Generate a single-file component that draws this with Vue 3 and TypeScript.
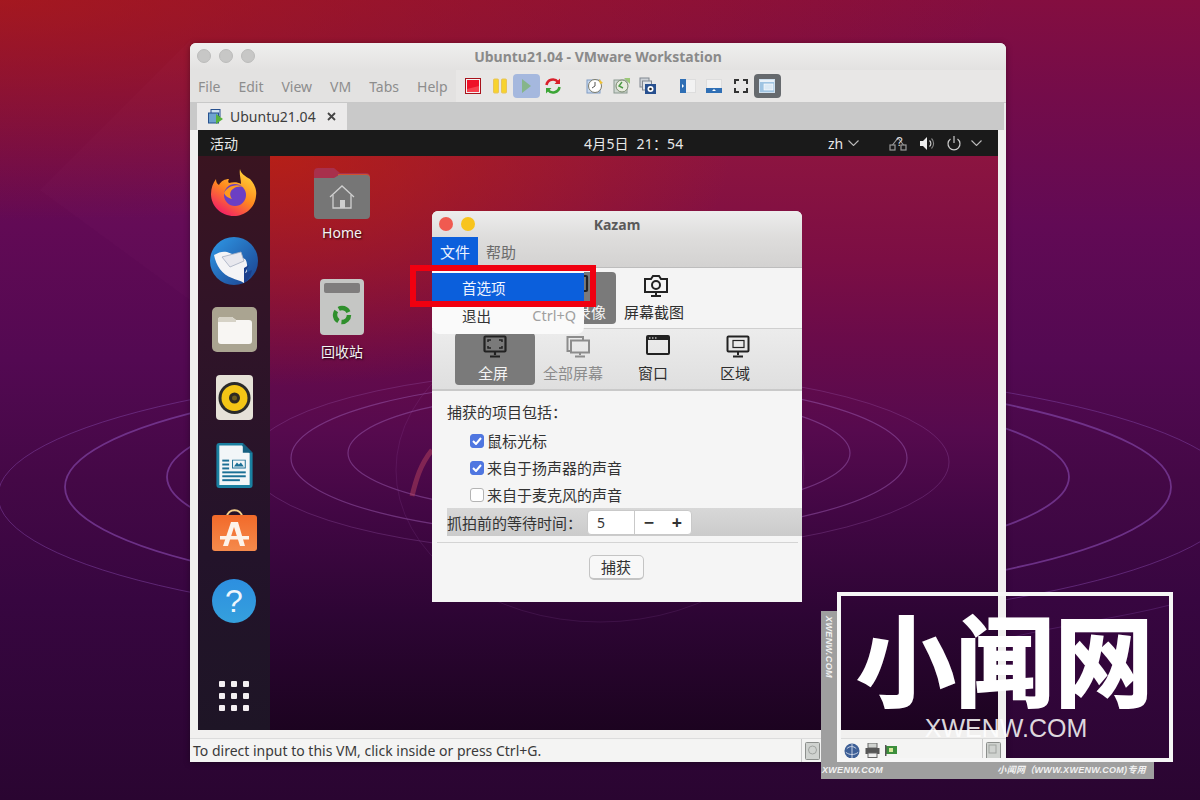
<script setup lang="ts">
const menus: string[] = ['File', 'Edit', 'View', 'VM', 'Tabs', 'Help']

const sources = [
  { label: '全屏', active: true, muted: false, icon: 'full' },
  { label: '全部屏幕', active: false, muted: true, icon: 'all' },
  { label: '窗口', active: false, muted: false, icon: 'window' },
  { label: '区域', active: false, muted: false, icon: 'area' },
]

const options = [
  { label: '鼠标光标', checked: true },
  { label: '来自于扬声器的声音', checked: true },
  { label: '来自于麦克风的声音', checked: false },
]
</script>

<template>
  <div class="stage">
    <!-- wallpaper lines -->
    <svg class="wall-lines" width="1200" height="800" viewBox="0 0 1200 800" fill="none">
      <path d="M190 40L40 190L190 300Z" fill="#ff9ab8" fill-opacity=".018" />
      <g stroke="#7c3f9e" stroke-opacity=".75">
        <ellipse cx="618" cy="477" rx="451" ry="95" stroke-width="1.800" />
        <ellipse cx="618" cy="487" rx="553" ry="116" stroke-width="1.800" />
        <ellipse cx="618" cy="496" rx="620" ry="133" stroke-width="1" stroke-opacity=".55" />
      </g>
      <path d="M1000 640C1060 625 1120 618 1170 605" stroke="#7c3f9e" stroke-opacity=".35" />
    </svg>

    <div class="vm-window">
      <div class="vm-title">
        <div class="lights">
          <i></i><i></i><i></i>
        </div>
        <span>Ubuntu21.04 - VMware Workstation</span>
      </div>

      <div class="vm-toolbar">
        <nav class="vm-menu">
          <span v-for="m in menus" :key="m">{{ m }}</span>
        </nav>
        <div class="tools">
          <span class="tool">
            <svg width="16" height="16" viewBox="0 0 16 16">
              <rect x=".5" y=".5" width="15" height="15" fill="#f3f3f3" stroke="#a8131c" />
              <rect x="2" y="2" width="12" height="12" fill="#ee1128" />
              <path d="M14 14H2V11L14 8z" fill="#f8404e" />
            </svg>
          </span>
          <span class="tool">
            <svg width="16" height="16" viewBox="0 0 16 16">
              <rect x="1.500" y="1" width="5" height="14" rx="1" fill="#f7d32e" stroke="#e8c45a" />
              <rect x="9.500" y="1" width="5" height="14" rx="1" fill="#f7d32e" stroke="#e8c45a" />
            </svg>
          </span>
          <span class="tool tool-on">
            <svg width="16" height="16" viewBox="0 0 16 16"><path d="M4 1l9 7-9 7z" fill="#86b58a" /></svg>
          </span>
          <span class="tool">
            <svg width="18" height="18" viewBox="0 0 18 18" fill="none">
              <path d="M2.500 8A6.500 6.500 0 0 1 14 5" stroke="#d91f2a" stroke-width="2.600" />
              <path d="M15.500 10A6.500 6.500 0 0 1 4 13" stroke="#3ba535" stroke-width="2.600" />
              <path d="M16 1.500v5.500h-5.500z" fill="#d91f2a" />
              <path d="M2 16.500V11h5.500z" fill="#3ba535" />
            </svg>
          </span>
          <span class="tool gap-left">
            <svg width="18" height="18" viewBox="0 0 18 18">
              <rect x="1" y="3" width="13" height="13" fill="#c8d8ee" stroke="#7f9cc4" />
              <circle cx="9" cy="9" r="6.500" fill="#fff" stroke="#7a7a6a" />
              <path d="M9 5v4l-3 2" stroke="#555" fill="none" />
              <path d="M13 2l4 4-3 1z" fill="#f2c230" />
            </svg>
          </span>
          <span class="tool">
            <svg width="18" height="18" viewBox="0 0 18 18">
              <rect x="1" y="3" width="13" height="13" fill="#cfd6d0" stroke="#8a9a90" />
              <circle cx="9" cy="9" r="6" fill="#e8ecdf" stroke="#7a8a70" />
              <path d="M9 5l-3 4 4 2" stroke="#4d9a45" stroke-width="1.400" fill="none" />
              <path d="M11 1h6v6z" fill="#9cc878" />
            </svg>
          </span>
          <span class="tool">
            <svg width="18" height="18" viewBox="0 0 18 18">
              <rect x="1" y="1" width="9" height="9" fill="#cfd3d8" stroke="#808890" />
              <rect x="3.500" y="4" width="9" height="9" fill="#dfe3e8" stroke="#808890" />
              <rect x="6" y="7" width="11" height="10" fill="#27508f" />
              <circle cx="11.500" cy="12" r="3" fill="#fff" />
              <circle cx="11.500" cy="12" r="1.300" fill="#222" />
            </svg>
          </span>
          <span class="tool gap-right">
            <svg width="16" height="16" viewBox="0 0 16 16">
              <rect x=".5" y="1.500" width="15" height="13" fill="#f2f2f2" stroke="#ddd" />
              <rect x="0" y="1" width="6" height="14" fill="#2f6fb5" />
              <path d="M2 6l2 2-2 2z" fill="#fff" />
            </svg>
          </span>
          <span class="tool">
            <svg width="16" height="16" viewBox="0 0 16 16">
              <rect x=".5" y="1.500" width="15" height="13" fill="#f2f2f2" stroke="#ddd" />
              <rect x="0" y="10" width="16" height="5" fill="#2f6fb5" />
              <path d="M6 13l2-2 2 2z" fill="#fff" />
            </svg>
          </span>
          <span class="tool">
            <svg width="14" height="14" viewBox="0 0 14 14" fill="none" stroke="#333" stroke-width="2">
              <path d="M1 5V1h4M9 1h4v4M13 9v4H9M5 13H1V9" />
            </svg>
          </span>
          <span class="tool tool-dark">
            <svg width="16" height="14" viewBox="0 0 16 14">
              <rect x=".5" y=".5" width="15" height="13" fill="#9fc4e2" stroke="#cfe0ee" />
              <rect x="1" y="1" width="14" height="2" fill="#e9f1f8" />
              <rect x="5" y="5" width="9" height="6" fill="#dbe9f4" stroke="#fff" stroke-width=".6" />
            </svg>
          </span>
        </div>
      </div>

      <div class="vm-tabs">
        <div class="vm-tab">
          <svg width="16" height="16" viewBox="0 0 16 16">
            <rect x="3" y="0.5" width="9" height="7" fill="#cfe0ef" stroke="#27508f" />
            <rect x=".5" y="4" width="10" height="10" fill="#6fa3cf" stroke="#27508f" />
            <path d="M8 5l7 5-7 5z" fill="#57b13a" />
          </svg>
          <span>Ubuntu21.04</span>
          <svg class="tab-x" width="9" height="9" viewBox="0 0 9 9" stroke="#444" stroke-width="1.800">
            <path d="M1 1l7 7M8 1l-7 7" />
          </svg>
        </div>
      </div>

      <div class="guest">
        <header class="gnome-bar">
          <span class="activities">活动</span>
          <span class="clock">4月5日&nbsp;&nbsp;21：54</span>
          <div class="tray">
            <span class="lang">zh</span>
            <svg class="caret" width="11" height="6" viewBox="0 0 11 6" fill="none" stroke="#bbb" stroke-width="1.100"><path d="M.5.5l5 5 5-5" /></svg>
            <svg class="net" width="18" height="16" viewBox="0 0 18 16" fill="none" stroke="#999" stroke-width="1.200">
              <rect x="1" y="10" width="5" height="5" />
              <rect x="12" y="10" width="5" height="5" />
              <path d="M3.500 10L9 3l5.500 7" />
              <text x="7" y="11" font-size="12" fill="#ddd" stroke="none" font-family="Liberation Sans, sans-serif">?</text>
            </svg>
            <svg class="vol" width="15" height="13" viewBox="0 0 15 13" fill="none">
              <path d="M0 4h3l4-4v13l-4-4H0z" fill="#eee" />
              <path d="M9.500 3.500a4 4 0 0 1 0 6" stroke="#ccc" stroke-width="1.200" />
              <path d="M11.500 1.500a7 7 0 0 1 0 10" stroke="#888" stroke-width="1.100" />
            </svg>
            <svg class="pow" width="14" height="15" viewBox="0 0 14 15" fill="none" stroke="#ccc" stroke-width="1.200">
              <path d="M7 0v7" />
              <path d="M3.500 3a6 6 0 1 0 7 0" />
            </svg>
            <svg class="caret last" width="11" height="6" viewBox="0 0 11 6" fill="none" stroke="#bbb" stroke-width="1.100"><path d="M.5.5l5 5 5-5" /></svg>
          </div>
        </header>

        <div class="guest-body">
          <aside class="dock">
            <!-- firefox -->
            <svg width="46" height="48" viewBox="0 0 46 48">
              <defs>
                <linearGradient id="ff" x1="0.8" y1="0" x2="0.2" y2="1">
                  <stop offset="0" stop-color="#ffd93b" />
                  <stop offset=".5" stop-color="#ff8a1f" />
                  <stop offset="1" stop-color="#f0146c" />
                </linearGradient>
              </defs>
              <path d="M29 1c1 5 5 7 10 10 5 5 7 12 6 17-1 12-11 20-22 20C10 48 0 38 0 26 0 20 2 15 5 11c0 3 1 5 3 6 2-4 6-6 10-6-1 2-1 3 0 4 4-1 9-1 12 1 0-5-2-10-1-15z" fill="url(#ff)" />
              <circle cx="24" cy="27" r="11" fill="#6b3fc4" />
              <path d="M13 25c3-6 12-11 22-5-4-2-9-2-13 1-3 2-4 6-1 10-4-1-7-3-8-6z" fill="#ff9a1f" />
            </svg>
            <!-- thunderbird -->
            <svg width="48" height="48" viewBox="0 0 48 48">
              <defs>
                <linearGradient id="tb" x1="0" y1="0" x2="1" y2="1">
                  <stop offset="0" stop-color="#2f9ae8" />
                  <stop offset="1" stop-color="#1b3f8c" />
                </linearGradient>
              </defs>
              <circle cx="24" cy="24" r="24" fill="url(#tb)" />
              <path d="M4 18c5-3 9-4 13-3l18 7c3 3 3 12-1 24-4-3-8-3-12-5C12 38 6 28 4 18z" fill="#f4f4f6" />
              <path d="M12 20l19-5 3 9-14 6z" fill="#e8e8ee" stroke="#a5adc0" stroke-width=".8" />
              <path d="M34 46c5-3 7-8 8-13l-7 3 4-8-5 3z" fill="#1b3f8c" />
            </svg>
            <!-- files -->
            <svg class="tile-files" width="45" height="45" viewBox="0 0 45 45">
              <rect width="45" height="45" rx="5" fill="#aaa491" />
              <path d="M6 13a3 3 0 0 1 3-3h11l4 3h13a3 3 0 0 1 3 3v18a3 3 0 0 1-3 3H9a3 3 0 0 1-3-3z" fill="#f8f6f3" />
              <path d="M6 13a3 3 0 0 1 3-3h11l4 3v2H6z" fill="#d6d2c6" />
            </svg>
            <!-- rhythmbox -->
            <svg width="37" height="45" viewBox="0 0 37 45">
              <rect width="37" height="45" rx="4" fill="#e6e1d8" />
              <circle cx="18.500" cy="23" r="16" fill="#2a2a2a" />
              <circle cx="18.500" cy="23" r="13" fill="#f3c516" />
              <circle cx="18.500" cy="23" r="5.500" fill="#2d2a22" />
              <circle cx="18.500" cy="23" r="2.500" fill="#6c5c1c" />
            </svg>
            <!-- writer -->
            <svg class="tile-writer" width="37" height="45" viewBox="0 0 37 46">
              <path d="M3 0h24l10 10v33a3 3 0 0 1-3 3H3a3 3 0 0 1-3-3V3a3 3 0 0 1 3-3z" fill="#1a7fa0" />
              <path d="M3 2.500h23l8 8V43H3z" fill="#f2f6f8" />
              <path d="M27 0l10 10H27z" fill="#155f80" />
              <g fill="#1a6f95">
                <rect x="6" y="17" width="7" height="2" />
                <rect x="6" y="21" width="7" height="2" />
                <rect x="6" y="25" width="7" height="2" />
                <rect x="6" y="29" width="24" height="2" />
                <rect x="6" y="33" width="24" height="2" />
                <rect x="6" y="37" width="18" height="2" />
                <path d="M16 17h14v9H16zm1 1v7h12v-7z" />
                <path d="M18 24l3-4 2 2 2-2 3 4z" />
              </g>
            </svg>
            <!-- software -->
            <svg width="45" height="42" viewBox="0 0 45 42">
              <defs>
                <linearGradient id="sw" x1="0" y1="0" x2="0" y2="1">
                  <stop offset="0" stop-color="#f26a2a" />
                  <stop offset="1" stop-color="#f58a4c" />
                </linearGradient>
              </defs>
              <path d="M15 8c0-9 15-9 15 0" fill="none" stroke="#f5d08a" stroke-width="2" />
              <rect y="6" width="45" height="36" rx="3" fill="url(#sw)" />
              <path d="M19 13h7l7 24h-5l-6-19-6 19h-5z" fill="#fdf3ea" />
              <rect x="8" y="27" width="29" height="3.500" fill="#fdf3ea" />
            </svg>
            <!-- help -->
            <div class="help">?</div>
            <div class="app-grid">
              <i v-for="n in 9" :key="n"></i>
            </div>
          </aside>

          <main class="desktop">
            <svg class="guest-lines" width="728" height="574" viewBox="270 156 728 574" fill="none">
              <g stroke="#9a5ab0" stroke-opacity=".5" stroke-width="1.200">
                <ellipse cx="599" cy="453" rx="251" ry="62" />
                <ellipse cx="599" cy="458" rx="308" ry="78" />
                <ellipse cx="599" cy="462" rx="350" ry="92" stroke-opacity=".3" stroke-width="1" />
                <ellipse cx="600" cy="470" rx="204" ry="152" stroke-opacity=".16" stroke-width="1" />
              </g>
              <path d="M432 450C420 465 416 480 412 496" stroke="#c04a60" stroke-opacity=".45" stroke-width="5" />
            </svg>

            <figure class="desk-icon home">
              <svg width="56" height="52" viewBox="0 0 56 52">
                <path d="M0 5a4 4 0 0 1 4-4h16l6 5h26a4 4 0 0 1 4 4v8H0z" fill="#a8304c" />
                <path d="M24 7h28a4 4 0 0 1 4 4v6H24z" fill="#d4582c" opacity=".9" />
                <path d="M0 11h20l5-3h27a4 4 0 0 1 4 4v36a4 4 0 0 1-4 4H4a4 4 0 0 1-4-4z" fill="#767676" />
                <g fill="none" stroke="#cfcfcf" stroke-width="1.300">
                  <path d="M16 30l12-11 12 11" />
                  <path d="M19 28v13h18V28" />
                </g>
                <rect x="26" y="33" width="5" height="8" fill="#cfcfcf" />
              </svg>
              <figcaption>Home</figcaption>
            </figure>
            <figure class="desk-icon trash">
              <svg width="44" height="56" viewBox="0 0 44 56">
                <rect width="44" height="56" rx="4" fill="#c5c6c4" />
                <rect x="4" y="4" width="36" height="10" rx="2" fill="#7f7d7d" />
                <circle cx="22" cy="36" r="7" fill="none" stroke="#2f8f2c" stroke-width="4.400" stroke-dasharray="11.500 3.160" />
              </svg>
              <figcaption>回收站</figcaption>
            </figure>

            <section class="kazam">
              <div class="k-title">
                <i class="k-close"></i><i class="k-min"></i>
                <strong>Kazam</strong>
              </div>
              <div class="k-menubar">
                <span class="k-menu on">文件</span>
                <span class="k-menu">帮助</span>
              </div>
              <div class="k-toolbar">
                <div class="k-item on">
                  <svg width="26" height="24" viewBox="0 0 26 24" fill="none" stroke="#222" stroke-width="2.200">
                    <rect x="2" y="2" width="22" height="15" rx="1" />
                    <path d="M13 17v4M8 22h10" />
                  </svg>
                  <span>屏幕录像</span>
                </div>
                <div class="k-item">
                  <svg width="26" height="24" viewBox="0 0 26 24" fill="none" stroke="#222" stroke-width="2">
                    <path d="M2 5h6l2-3h6l2 3h6v13H2z" />
                    <circle cx="13" cy="11" r="4" />
                    <path d="M13 18v3M8 22h10" />
                  </svg>
                  <span>屏幕截图</span>
                </div>
              </div>
              <div class="k-sources">
                <div v-for="s in sources" :key="s.label" class="k-item" :class="{ on: s.active, muted: s.muted }">
                  <svg v-if="s.icon === 'full'" width="24" height="24" viewBox="0 0 24 24" fill="none" stroke="#222" stroke-width="2.200">
                    <rect x="1.500" y="1.500" width="21" height="15" rx="1" />
                    <path d="M5 7V5h3M16 5h3v2M19 11v2h-3M8 13H5v-2" stroke-width="1.500" />
                    <path d="M12 17v3M7 21.500h10" />
                  </svg>
                  <svg v-else-if="s.icon === 'all'" width="24" height="24" viewBox="0 0 24 24" fill="none" stroke="#8c8c8c" stroke-width="2">
                    <path d="M4 16H1.500V2H17v3" />
                    <rect x="5" y="5.500" width="18" height="12" />
                    <path d="M14 18v2M9 21.500h10" />
                  </svg>
                  <svg v-else-if="s.icon === 'window'" width="24" height="20" viewBox="0 0 24 20" fill="none">
                    <rect x="1" y="1" width="22" height="18" rx="1" stroke="#222" stroke-width="2" />
                    <rect x="1" y="1" width="22" height="4" fill="#222" />
                    <path d="M3 3h1.500M6 3h1.500M9 3h1.500" stroke="#fff" />
                  </svg>
                  <svg v-else width="24" height="24" viewBox="0 0 24 24" fill="none" stroke="#222" stroke-width="2">
                    <rect x="1.500" y="1.500" width="21" height="15" rx="1" />
                    <rect x="7" y="5.500" width="11" height="7" stroke-width="1.200" />
                    <path d="M12 17v3M7 21.500h10" />
                  </svg>
                  <span>{{ s.label }}</span>
                </div>
              </div>

              <div class="k-body">
                <p class="k-heading">捕获的项目包括：</p>
                <label v-for="o in options" :key="o.label" class="k-check">
                  <span class="box" :class="{ checked: o.checked }">
                    <svg v-if="o.checked" width="10" height="8" viewBox="0 0 10 8" fill="none" stroke="#fff" stroke-width="2"><path d="M1 4l3 3 5-6" /></svg>
                  </span>
                  {{ o.label }}
                </label>
                <div class="k-delay">
                  <span>抓拍前的等待时间：</span>
                  <div class="spin">
                    <span class="spin-val">5</span>
                    <span class="spin-btn">−</span>
                    <span class="spin-btn">+</span>
                  </div>
                </div>
                <hr />
                <div class="k-actions"><button type="button">捕获</button></div>
              </div>

              <div class="k-dropdown">
                <div class="k-opt on"><span>首选项</span></div>
                <div class="k-opt"><span>退出</span><em>Ctrl+Q</em></div>
              </div>
              <div class="red-mark"></div>
            </section>
          </main>
        </div>
      </div>

      <footer class="vm-status">
        <span class="status-msg">To direct input to this VM, click inside or press Ctrl+G.</span>
        <div class="status-cell">
          <svg width="15" height="18" viewBox="0 0 15 18">
            <rect x=".5" y=".5" width="14" height="17" rx="1" fill="#cfd2cf" stroke="#8c8f8c" />
            <circle cx="7.500" cy="8" r="4" fill="none" stroke="#a0a3a0" />
          </svg>
        </div>
        <div class="status-cell wide">
          <svg width="16" height="16" viewBox="0 0 17 17">
            <circle cx="8.500" cy="8.500" r="8" fill="#3d5f96" />
            <path d="M3 6c3-3 7-3 10 0M2 10c4 3 9 3 13 0M8.500 1v15" stroke="#cfd8e8" fill="none" />
          </svg>
          <svg width="15" height="15" viewBox="0 0 15 15">
            <rect x="3" y="0" width="9" height="5" fill="#cfd2cf" stroke="#666" />
            <rect x=".5" y="5" width="14" height="6" fill="#555" />
            <rect x="3" y="10" width="9" height="4.500" fill="#eee" stroke="#666" />
          </svg>
          <svg width="12" height="11" viewBox="0 0 12 11">
            <rect x="1" y="1" width="11" height="8" fill="#3c8f3c" />
            <rect x="4" y="3" width="4" height="4" fill="#d8e89a" />
            <rect x="0" y="0" width="1.500" height="11" fill="#555" />
          </svg>
        </div>
        <div class="status-cell">
          <svg width="15" height="18" viewBox="0 0 15 18">
            <rect x=".5" y=".5" width="14" height="17" rx="1" fill="#cfd2cf" stroke="#8c8f8c" />
            <rect x="3" y="3" width="7" height="8" fill="none" stroke="#a0a3a0" />
          </svg>
        </div>
      </footer>
    </div>

    <!-- watermark -->
    <div class="wm-back">
      <span class="wm-side">XWENW.COM</span>
      <div class="wm-foot">
        <span>XWENW.COM</span>
        <span>小闻网（WWW.XWENW.COM)专用</span>
      </div>
    </div>
    <div class="wm-frame">
      <strong>小闻网</strong>
      <span>XWENW.COM</span>
    </div>
  </div>
</template>

<style scoped>
.stage {
  position: relative;
  width: 1200px;
  height: 800px;
  overflow: hidden;
  box-sizing: border-box;
  padding: 43px 0 0 190px;
  font-family: "Noto Sans", "Noto Sans CJK SC", sans-serif;
  background:
    radial-gradient(1000px 220px at 0 0, rgba(185, 30, 10, .6), rgba(185, 30, 10, 0)),
    linear-gradient(180deg, #840e40 0%, #740c4a 12%, #620a55 28%, #530952 45%, #440846 60%, #370640 75%, #2a0531 100%);
}
.wall-lines {
  position: absolute;
  inset: 0;
}

.vm-window {
  position: relative;
  width: 816px;
  height: 719px;
  display: flex;
  flex-direction: column;
  background: #f1f0ef;
  border-radius: 6px 6px 0 0;
  color: #3c3c3c;
  box-shadow: 0 1px 6px rgba(0, 0, 0, .35);
}
.vm-title {
  position: relative;
  height: 27px;
  flex: none;
  display: flex;
  align-items: center;
  justify-content: center;
  background: linear-gradient(#efefee, #e3e2e1);
  border-radius: 6px 6px 0 0;
  font-size: 14px;
  font-weight: 700;
  color: #8a8a8a;
}
.lights {
  position: absolute;
  left: 7px;
  top: 6px;
  display: flex;
  gap: 8px;
}
.lights i {
  width: 14px;
  height: 14px;
  border-radius: 50%;
  background: #c7c7c6;
  border: 1px solid #bcbcbb;
  box-sizing: border-box;
}
.vm-toolbar {
  height: 33px;
  flex: none;
  display: flex;
  background: #e3e2e1;
  border-bottom: 1px solid #c8c8c8;
  box-sizing: border-box;
}
.vm-menu {
  width: 266px;
  display: flex;
  align-items: center;
  gap: 18px;
  padding-left: 8px;
  box-sizing: border-box;
  font-size: 14px;
  color: #8d8d8d;
}
.tools {
  flex: 1;
  display: flex;
  align-items: center;
  padding-left: 4px;
  box-sizing: border-box;
  background: #e8e7e6;
}
.tool {
  width: 26.500px;
  height: 24px;
  display: flex;
  align-items: center;
  justify-content: center;
  border-radius: 4px;
  flex: none;
}
.tool-on {
  background: #a5b8de;
}
.tool-dark {
  background: #666a6e;
}
.gap-left {
  margin-left: 16px;
}
.gap-right {
  margin-left: 13px;
}
.vm-tabs {
  height: 27px;
  flex: none;
  display: flex;
  background: #c9c9c9;
  padding-left: 7px;
  border-right: 2px solid #ebebeb;
  box-sizing: border-box;
}
.vm-tab {
  width: 150px;
  display: flex;
  align-items: center;
  gap: 6px;
  padding-left: 11px;
  box-sizing: border-box;
  background: #ebeaea;
  font-size: 14px;
  color: #3e3e3e;
}
.tab-x {
  margin-left: 5px;
}
.guest {
  flex: none;
  width: 800px;
  height: 600px;
  margin: 0 0 8px 8px;
  display: flex;
  flex-direction: column;
}
.gnome-bar {
  position: relative;
  height: 26px;
  flex: none;
  display: flex;
  align-items: center;
  background: #1a1a1a;
  color: #e8e8e8;
  font-size: 14px;
}
.activities {
  margin-left: 12px;
}
.clock {
  position: absolute;
  left: 386px;
  letter-spacing: .2px;
}
.tray {
  position: absolute;
  left: 630px;
  top: 0;
  height: 26px;
  display: flex;
  align-items: center;
}
.caret {
  margin-left: 5px;
}
.net {
  margin-left: 30px;
}
.vol {
  margin-left: 13px;
}
.pow {
  margin-left: 12px;
}
.caret.last {
  margin-left: 10px;
}
.guest-body {
  flex: 1;
  display: flex;
  min-height: 0;
}
.dock {
  width: 72px;
  flex: none;
  display: flex;
  flex-direction: column;
  align-items: center;
  background: linear-gradient(#3a1420, #301428 30%, #23132a 70%, #1e1526);
  padding-top: 12px;
  box-sizing: border-box;
}
.dock svg {
  display: block;
  margin-bottom: 21px;
}
.tile-files {
  margin-top: 1px;
  margin-bottom: 23px !important;
}
.tile-writer {
  margin-top: 2px;
}
.help {
  width: 44px;
  height: 44px;
  margin-top: 7px;
  border-radius: 50%;
  background: linear-gradient(#2d8fe0, #35a0dd);
  color: #eef6fc;
  font-size: 32px;
  line-height: 44px;
  text-align: center;
  font-family: "Liberation Sans", sans-serif;
}
.app-grid {
  margin-top: 58px;
  display: grid;
  grid-template-columns: repeat(3, 6px);
  gap: 6px;
}
.app-grid i {
  width: 6px;
  height: 6px;
  border-radius: 1px;
  background: #f4eef2;
}
.desktop {
  position: relative;
  flex: 1;
  background:
    radial-gradient(460px 230px at 0 0, rgba(195, 35, 10, .75), rgba(195, 35, 10, 0)),
    linear-gradient(180deg, #8c1440 0%, #7c0e44 18%, #6a0b4a 32%, #560a4e 48%, #420744 62%, #2d0534 80%, #1c0320 100%);
}
.guest-lines {
  position: absolute;
  inset: 0;
}
.desk-icon {
  position: absolute;
  margin: 0;
  display: flex;
  flex-direction: column;
  align-items: center;
  color: #f4f4f4;
  font-size: 14px;
  text-shadow: 1px 1px 2px rgba(0, 0, 0, .8);
  width: 80px;
}
.home {
  left: 32px;
  top: 11px;
}
.trash {
  left: 32px;
  top: 123px;
}
.desk-icon figcaption {
  margin-top: 5px;
  line-height: 18px;
}
.trash figcaption {
  margin-top: 8px;
}

.kazam {
  position: absolute;
  left: 162px;
  top: 55px;
  width: 370px;
  height: 391px;
  background: #f5f5f5;
  border-radius: 6px 6px 0 0;
  color: #333;
  font-size: 15px;
}
.k-title {
  position: relative;
  height: 26px;
  display: flex;
  align-items: center;
  justify-content: center;
  background: linear-gradient(#ededed, #dedddc);
  border-radius: 6px 6px 0 0;
}
.k-title strong {
  font-size: 14px;
  color: #5a5a5a;
}
.k-close,
.k-min {
  position: absolute;
  top: 6px;
  width: 14px;
  height: 14px;
  border-radius: 50%;
}
.k-close {
  left: 7px;
  background: #f05a50;
}
.k-min {
  left: 29px;
  background: #f8c41c;
}
.k-menubar {
  height: 31px;
  display: flex;
  background: linear-gradient(#dedddc, #d3d2d1);
  border-bottom: 1px solid #bdbdbd;
  box-sizing: border-box;
}
.k-menu {
  width: 46px;
  display: flex;
  align-items: center;
  justify-content: center;
  color: #6c6c6c;
  padding-bottom: 1px;
  box-sizing: border-box;
}
.k-menu.on {
  background: #0b5fdc;
  color: #eaf2ff;
}
.k-toolbar {
  height: 61px;
  display: flex;
  align-items: center;
  padding-left: 104px;
  background: #f4f4f4;
  border-bottom: 1px solid #cfcfcf;
  box-sizing: border-box;
}
.k-toolbar .k-item:last-child span {
  margin-right: 4px;
}
.k-sources {
  height: 62px;
  display: flex;
  align-items: center;
  padding-left: 23px;
  background: linear-gradient(#ececec, #dfdfdf);
  border-bottom: 2px solid #c9c9c9;
  box-sizing: border-box;
}
.k-item {
  width: 80px;
  height: 52px;
  display: flex;
  flex-direction: column;
  align-items: center;
  justify-content: space-between;
  border-radius: 4px;
  color: #2e2e2e;
  padding: 2px 0 2px;
  box-sizing: border-box;
  line-height: 20px;
}
.k-sources .k-item:not(.on) svg {
  margin-left: 5px;
}
.k-sources .k-item:not(:last-child) span {
  margin-right: 4px;
}
.k-item.on {
  background: #7a7a7a;
  color: #f4f4f4;
}
.k-item.muted {
  color: #8c8c8c;
}
.k-body {
  padding: 10px 0 0 15px;
}
.k-heading {
  margin: 0;
  line-height: 22px;
  height: 26px;
}
.k-check {
  display: flex;
  align-items: center;
  height: 27px;
  padding-left: 23px;
  gap: 3px;
}
.box {
  width: 14px;
  height: 14px;
  border-radius: 3px;
  box-sizing: border-box;
  background: #fff;
  border: 1px solid #b4b4b4;
  display: flex;
  align-items: center;
  justify-content: center;
}
.box.checked {
  background: #4f76e0;
  border-color: #4f76e0;
}
.k-delay {
  display: flex;
  align-items: center;
  height: 28px;
  background: linear-gradient(#d8d8d8, #cbcbcb);
}
.k-delay > span {
  width: 140px;
}
.spin {
  height: 25px;
  width: 105px;
  display: flex;
  align-items: center;
  background: #fff;
  border: 1px solid #c9c9c9;
  border-radius: 4px;
  box-sizing: border-box;
}
.spin-val {
  width: 47px;
  padding-left: 9px;
  box-sizing: border-box;
  border-right: 1px solid #c9c9c9;
  line-height: 23px;
  font-size: 14px;
}
.spin-btn {
  width: 28px;
  text-align: center;
  font-size: 18px;
  font-weight: 700;
  color: #333;
  line-height: 23px;
}
.k-body hr {
  margin: 6px 4px 0 -10px;
  border: 0;
  border-top: 1px solid #d4d4d4;
}
.k-actions {
  display: flex;
  justify-content: center;
  padding: 12px 17px 0 0;
}
.k-actions button {
  width: 55px;
  height: 25px;
  padding: 0;
  background: #f8f8f8;
  border: 1px solid #c4c4c4;
  border-bottom-width: 2px;
  border-radius: 5px;
  font: inherit;
  line-height: 20px;
  color: #333;
}
.k-dropdown {
  position: absolute;
  left: 0;
  top: 60px;
  width: 152px;
  height: 63px;
  padding-top: 2px;
  box-sizing: border-box;
  background: #fafafa;
  border-radius: 0 0 7px 7px;
  font-size: 14.500px;
}
.k-opt {
  height: 28px;
  display: flex;
  align-items: center;
  justify-content: space-between;
  padding: 0 8px 0 30px;
  color: #333;
}
.k-opt.on {
  background: #0b5fdc;
  color: #eef4ff;
}
.k-opt em {
  font-style: normal;
  color: #a0a0a0;
}
.red-mark {
  position: absolute;
  left: -22px;
  top: 54px;
  width: 186px;
  height: 42px;
  border: 6px solid #f00010;
  box-sizing: border-box;
}

.vm-status {
  flex: 1;
  display: flex;
  align-items: stretch;
  background: #f4f4f3;
  border-top: 1px solid #dcdcdc;
  font-size: 14px;
  color: #3a3a3a;
}
.status-msg {
  width: 613px;
  padding-left: 3px;
  box-sizing: border-box;
  line-height: 23px;
}
.status-cell {
  width: 24px;
  display: flex;
  align-items: center;
  gap: 5px;
  padding-left: 3px;
  box-sizing: border-box;
  border-left: 1px solid #c9c9c9;
}
.status-cell.wide {
  width: 157px;
  padding-left: 18px;
}

.wm-back {
  position: absolute;
  left: 821px;
  top: 611px;
  width: 333px;
  height: 168px;
  box-sizing: border-box;
  border-left: 16px solid #9f9f9f;
  border-bottom: 17px solid #9f9f9f;
}
.wm-side {
  position: absolute;
  left: -13px;
  top: 5px;
  writing-mode: vertical-rl;
  font: italic 700 9px "Liberation Sans", sans-serif;
  letter-spacing: .4px;
  color: #f2f2f2;
}
.wm-foot {
  position: absolute;
  left: -15px;
  right: 8px;
  top: 100%;
  display: flex;
  justify-content: space-between;
  font: italic 700 9px/17px "Liberation Sans", "Noto Sans CJK SC", sans-serif;
  letter-spacing: .3px;
  color: #f2f2f2;
}
.wm-frame {
  position: absolute;
  left: 837px;
  top: 592px;
  width: 336px;
  height: 170px;
  box-sizing: border-box;
  border: 4px solid #f6f6f6;
  display: flex;
  flex-direction: column;
  align-items: center;
  color: #fff;
}
.wm-frame strong {
  margin-top: 10px;
  font: 700 99px/100px "Noto Sans CJK SC", sans-serif;
  -webkit-text-stroke: 2px #fff;
  color: #fff;
  white-space: nowrap;
}
.wm-frame span {
  margin-top: 8px;
  margin-left: 2px;
  font: 400 25px/28px "Liberation Sans", sans-serif;
  color: rgba(255, 255, 255, .85);
}
</style>

<style>
html,
body {
  margin: 0;
  background: #2a0a33;
}
</style>
